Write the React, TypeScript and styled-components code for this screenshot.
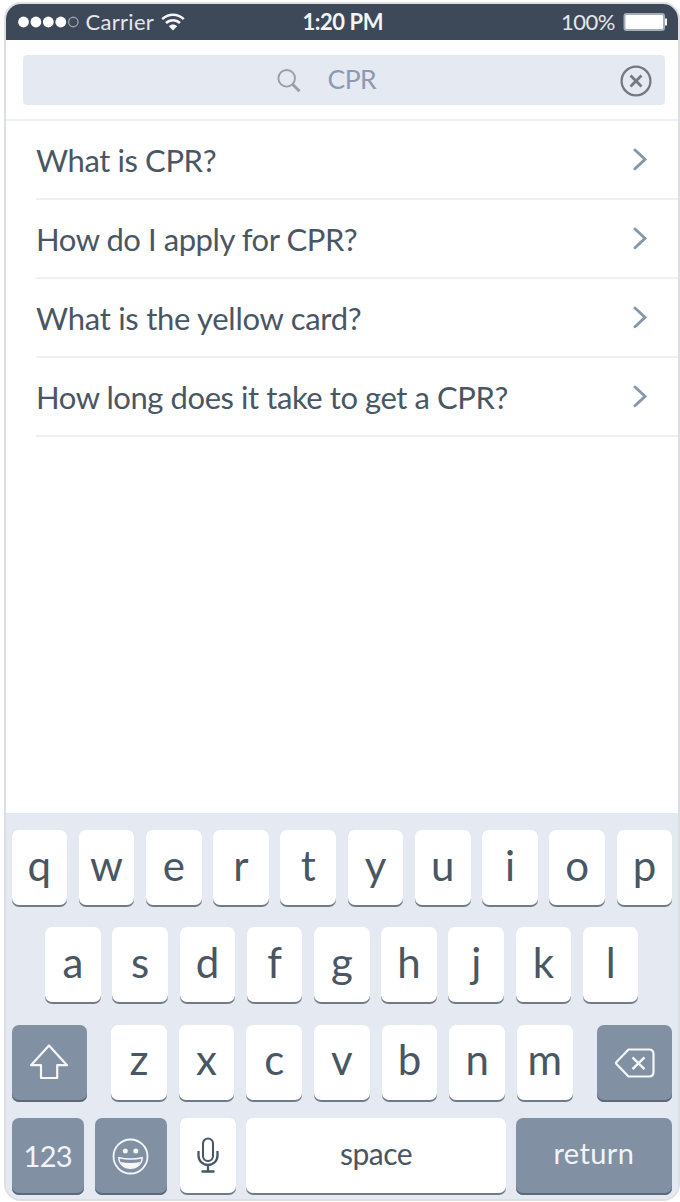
import React from 'react';
import styled, { createGlobalStyle } from 'styled-components';

const GlobalStyle = createGlobalStyle`
  * { box-sizing: border-box; }
  body { margin: 0; background: #fff; }
`;

const ink = '#495663';
const steel = '#8190a3';
const mist = '#e4e9f2';
const line = '#edf0f5';

const Page = styled.main`
  width: 680px;
  height: 1202px;
  padding: 2px 0 0 4px;
  background: #fff;
  font-family: Lato, "Liberation Sans", sans-serif;
  color: ${ink};
`;

const Phone = styled.div`
  display: flex;
  flex-direction: column;
  width: 676px;
  height: 1199px;
  border: 2px solid #dddfe2;
  border-radius: 17px;
  overflow: hidden;
  background: #fff;
`;

const StatusBar = styled.header`
  display: grid;
  grid-template-columns: 1fr auto 1fr;
  align-items: center;
  flex: none;
  height: 36px;
  padding: 0 10px 0 11.5px;
  background: #3d4858;
  color: #e4e7eb;
  font-size: 22px;
  line-height: 26px;
`;

const StatusGroup = styled.div<{ $end?: boolean }>`
  display: flex;
  align-items: center;
  justify-content: ${p => (p.$end ? 'flex-end' : 'flex-start')};
`;

const Dots = styled.svg`
  width: 61px;
  height: 12px;
  margin-right: 7px;
`;

const Label = styled.span<{ $tracking?: number; $gap: number }>`
  margin-right: ${p => p.$gap}px;
  letter-spacing: ${p => p.$tracking ?? 0}px;
`;

const Clock = styled.span`
  font-weight: 700;
  letter-spacing: -0.45px;
  color: #f3f4f6;
`;

const SearchBar = styled.div`
  flex: none;
  height: 81px;
  padding: 15px 13px 0 16.5px;
  border-bottom: 2px solid ${line};
`;

const SearchField = styled.div`
  display: flex;
  align-items: center;
  height: 50px;
  padding: 2px 13.5px 0 254px;
  border-radius: 4px;
  background: ${mist};
`;

const Query = styled.span`
  flex: 1;
  margin-left: 27px;
  padding-bottom: 4px;
  font-size: 26.5px;
  line-height: 32px;
  letter-spacing: -0.5px;
  color: #8c9bb0;
`;

const Results = styled.ul`
  flex: 1;
  margin: 0;
  padding: 0 0 0 30px;
  list-style: none;
`;

const Result = styled.li<{ $tracking: number }>`
  display: flex;
  align-items: center;
  justify-content: space-between;
  height: 79px;
  padding-right: 31px;
  border-bottom: 2px solid ${line};
  font-size: 31px;
  line-height: 38px;
  letter-spacing: ${p => p.$tracking}px;
  white-space: nowrap;
`;

const Keyboard = styled.section`
  flex: none;
  height: 386px;
  padding: 17px 5.8px 0 5.5px;
  background: ${mist};
`;

const KeyRow = styled.div<{ $inset?: number; $height: number }>`
  display: flex;
  justify-content: space-between;
  height: ${p => p.$height}px;
  padding: 0 ${p => p.$inset ?? 0}px;
`;

const Key = styled.div<{ $w?: number; $dark?: boolean; $size?: number; $tracking?: number; $drop?: number }>`
  display: flex;
  align-items: center;
  justify-content: center;
  flex: none;
  width: ${p => p.$w ?? 55.6}px;
  height: 77px;
  padding-bottom: ${p => p.$drop ?? 7}px;
  border-radius: 7px;
  background: ${p => (p.$dark ? steel : '#fff')};
  color: ${p => (p.$dark ? '#f1f4f8' : ink)};
  box-shadow: inset 0 -2px 0 ${p => (p.$dark ? '#5c697a' : '#6f7c88')};
  font-size: ${p => p.$size ?? 42}px;
  line-height: 50px;
  letter-spacing: ${p => p.$tracking ?? 0}px;
`;

const Letters = styled.div`
  display: flex;
  justify-content: space-between;
  width: 461.5px;
`;

const BottomGroup = styled.div<{ $after?: number }>`
  display: flex;
  gap: 10.5px;
  margin-right: ${p => p.$after ?? 0}px;
`;

const WifiIcon = () => (
  <svg width="24" height="18" viewBox="0 0 24 18" fill="none" stroke="#f4f5f7" strokeWidth="2.5">
    <path d="M1.2 6.2C7.4.3 16.6.3 22.8 6.2M5 10C9 6.2 15 6.2 19 10" />
    <path d="M7.8 13.2C10.2 10.8 13.8 10.8 16.2 13.2L12 17.5Z" fill="#f4f5f7" stroke="none" />
  </svg>
);

const BatteryIcon = () => (
  <svg width="45" height="18" viewBox="0 0 45 18">
    <rect x="1.5" y="1" width="39.5" height="16" rx="2" fill="#fff" stroke="#a6adb6" strokeWidth="2" />
    <path d="M42 5.5h2v7h-2z" fill="#f4f5f7" />
  </svg>
);

const SignalDots = () => (
  <Dots viewBox="0 0 61 12">
    {[5.5, 17.9, 30.3, 42.8].map(x => <circle key={x} cx={x} cy="6" r="5.4" fill="#fff" />)}
    <circle cx="55.3" cy="6" r="4.7" fill="none" stroke="#99a0aa" strokeWidth="1.4" />
  </Dots>
);

const SearchIcon = () => (
  <svg width="24" height="24" viewBox="0 0 24 24" fill="none" stroke="#9c9ea5">
    <circle cx="9.7" cy="9.3" r="8.3" strokeWidth="1.9" />
    <path d="m15.5 15.2 7 7" strokeWidth="3" />
  </svg>
);

const ClearIcon = () => (
  <svg width="32" height="32" viewBox="0 0 32 32" fill="none" stroke="#747880">
    <circle cx="16" cy="16" r="14.4" strokeWidth="2.3" />
    <path d="m10.5 10.5 11 11M21.5 10.5l-11 11" strokeWidth="2.8" />
  </svg>
);

const Chevron = () => (
  <svg width="14" height="23" viewBox="0 0 14 23" fill="none" stroke="#8797ab" strokeWidth="2.9" strokeLinecap="round">
    <path d="m2 2 10 9.3L2 20.8" />
  </svg>
);

const ShiftIcon = () => (
  <svg width="40" height="36" viewBox="0 0 40 36" fill="none" stroke="#f5f7fa" strokeWidth="2.2" strokeLinejoin="round">
    <path d="M20 1.5 38 21.2h-9.8V34H12V21.2H2Z" />
  </svg>
);

const DeleteIcon = () => (
  <svg width="40" height="30" viewBox="0 0 40 30" fill="none" stroke="#f5f7fa" strokeWidth="2.2" strokeLinejoin="round">
    <path d="M13.5 1.5H34q4.5 0 4.5 4.5v18q0 4.5-4.5 4.5H13.5L1.5 16q-.9-1 0-2Z" />
    <path d="m17.5 9.3 12 11.8m0-11.8-12 11.8" strokeWidth="2.4" />
  </svg>
);

const SmileIcon = () => (
  <svg width="37" height="37" viewBox="0 0 37 37" fill="none" stroke="#f5f7fa">
    <circle cx="18.5" cy="18.5" r="17" strokeWidth="1.8" />
    <circle cx="13.3" cy="13" r="2.5" fill="#f5f7fa" stroke="none" />
    <circle cx="23.8" cy="13" r="2.5" fill="#f5f7fa" stroke="none" />
    <path d="M6.8 19.7q11.7 2.8 23.4 0c0 5.9-5.2 10.5-11.7 10.5S6.8 25.6 6.8 19.7Z" strokeWidth="1.5" />
    <path d="M8.6 24q9.9 1.8 19.800 0c-2 4-5.600 6-9.900 6s-7.900-2-9.900-6Z" fill="#f5f7fa" stroke="none" />
  </svg>
);

const MicIcon = () => (
  <svg width="22" height="36" viewBox="0 0 22 36" fill="none" stroke={ink} strokeWidth="2.1">
    <rect x="6" y="1.5" width="10" height="22.5" rx="5" />
    <path d="M1.5 14v4.5a9.5 9.5 0 0 0 19 0V14M11 28v5.5M4.500 34.500h13" strokeWidth="2.3" />
  </svg>
);

const questions = [
  { text: 'What is CPR?', tracking: -0.4 },
  { text: 'How do I apply for CPR?', tracking: -0.44 },
  { text: 'What is the yellow card?', tracking: -0.27 },
  { text: 'How long does it take to get a CPR?', tracking: -0.43 },
];

const letterKeys = (row: string, drop = 7) =>
  row.split('').map(c => <Key key={c} $drop={drop}>{c}</Key>);

export default function App() {
  return (
    <Page>
      <GlobalStyle />
      <Phone>
        <StatusBar>
          <StatusGroup>
            <SignalDots />
            <Label $tracking={0.3} $gap={7}>Carrier</Label>
            <WifiIcon />
          </StatusGroup>
          <Clock>1:20 PM</Clock>
          <StatusGroup $end>
            <Label $tracking={-0.5} $gap={8}>100%</Label>
            <BatteryIcon />
          </StatusGroup>
        </StatusBar>
        <SearchBar>
          <SearchField>
            <SearchIcon />
            <Query>CPR</Query>
            <ClearIcon />
          </SearchField>
        </SearchBar>
        <Results>
          {questions.map(q => <Result key={q.text} $tracking={q.tracking}>{q.text}<Chevron /></Result>)}
        </Results>
        <Keyboard>
          <KeyRow $height={97}>{letterKeys('qwertyuiop', 8)}</KeyRow>
          <KeyRow $height={98} $inset={33.7}>{letterKeys('asdfghjkl', 8)}</KeyRow>
          <KeyRow $height={93}>
            <Key $dark $w={75} $drop={4}><ShiftIcon /></Key>
            <Letters>{letterKeys('zxcvbnm', 10)}</Letters>
            <Key $dark $w={75} $drop={2}><DeleteIcon /></Key>
          </KeyRow>
          <KeyRow $height={77}>
            <BottomGroup>
              <Key $dark $w={72.5} $size={29} $tracking={-0.6} $drop={2}>123</Key>
              <Key $dark $w={72.8} $drop={0}><SmileIcon /></Key>
            </BottomGroup>
            <BottomGroup $after={-3.2}>
              <Key $drop={4}><MicIcon /></Key>
              <Key $w={260} $size={30} $tracking={-0.5}>space</Key>
            </BottomGroup>
            <Key $dark $w={156.6} $size={29} $tracking={0.4}>return</Key>
          </KeyRow>
        </Keyboard>
      </Phone>
    </Page>
  );
}
